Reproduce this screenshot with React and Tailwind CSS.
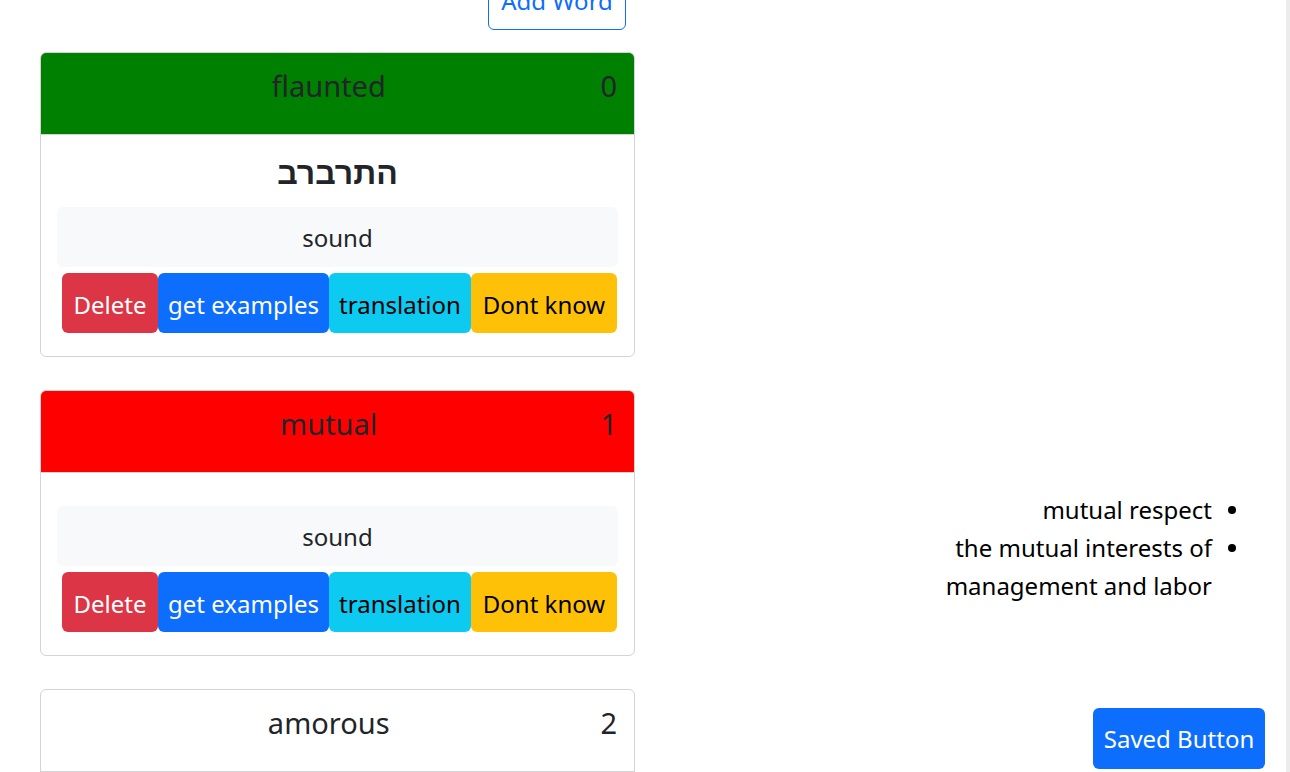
const cards = [
  { word: "flaunted", count: 0, hebrew: "התרברב", head: "bg-[#008000]" },
  { word: "mutual", count: 1, hebrew: "", head: "bg-[#ff0000]" },
];

const examples = ["mutual respect", "the mutual interests of management and labor"];

function WordCard({ word, count, hebrew, head }) {
  return (
    <div className="border border-[#d3d4d5] rounded-[6px] overflow-hidden mb-[33px]">
      <div className={`${head} h-[82px] border-b border-[#d3d4d5] flex items-start pt-[15px] pl-4 pr-[17px] text-[29px] leading-[35px] text-[#212529]`}>
        <span className="flex-1 text-center">{word}</span>
        <span>{count}</span>
      </div>
      <div className="px-4 pt-4 pb-[23px]">
        {hebrew ? (
          <div className="h-[42px] mb-[14px] pt-[2px] flex items-center justify-center text-[32px] font-bold text-[#212529] font-['Liberation_Sans','DejaVu_Sans',sans-serif]" dir="rtl">
            {hebrew}
          </div>
        ) : (
          <div className="h-[17px]" />
        )}
        <div className="bg-[#f8f9fa] rounded-[6px] h-[60px] pt-[2px] flex items-center justify-center text-[24px] text-[#212529]">
          sound
        </div>
        <div className="flex mt-[6px] ml-[5px] text-[24px] leading-[36px]">
          <button className="w-[96px] h-[60px] pt-[3px] rounded-[6px] bg-[#dc3545] text-white">Delete</button>
          <button className="w-[171px] h-[60px] pt-[3px] rounded-[6px] bg-[#0d6efd] text-white">get examples</button>
          <button className="w-[142px] h-[60px] pt-[3px] rounded-[6px] bg-[#0dcaf0] text-black">translation</button>
          <button className="w-[146px] h-[60px] pt-[3px] rounded-[6px] bg-[#ffc107] text-black">Dont know</button>
        </div>
      </div>
    </div>
  );
}

export default function App() {
  return (
    <div className="h-[772px] overflow-hidden bg-white flex font-['Noto_Sans','DejaVu_Sans',sans-serif] text-[#212529]">
      <div className="ml-[40px] w-[595px] mt-[-32px] shrink-0">
        <div className="flex justify-end pr-[9px] mb-[22px]">
          <button className="h-[62px] w-[138px] pt-[4px] border border-[#0d6efd] rounded-[6px] text-[24px] text-[#0d6efd]">Add Word</button>
        </div>
        {cards.map(c => <WordCard key={c.word} {...c} />)}
        <div className="border border-[#d3d4d5] rounded-[6px] overflow-hidden">
          <div className="h-[82px] border-b border-[#d3d4d5] flex items-start pt-[15px] pl-4 pr-[17px] text-[29px] leading-[35px]">
            <span className="flex-1 text-center">amorous</span>
            <span>2</span>
          </div>
          <div className="h-[60px]" />
        </div>
      </div>

      <div className="flex-1 flex flex-col items-end pr-[21px] pt-[491px]">
        <ul className="mr-[29px] text-[24px] leading-[38px] text-black">
          {examples.map(t => (
            <li key={t} className="flex items-start">
              <span className="w-[290px] text-right">{t}</span>
              <span className="h-[38px] w-[8px] ml-[16px] flex items-center">
                <span className="w-[8px] h-[8px] rounded-full bg-black" />
              </span>
            </li>
          ))}
        </ul>
        <button className="mt-[103px] h-[61px] w-[172px] rounded-[6px] bg-[#0d6efd] text-white text-[24px]">Saved Button</button>
      </div>

      <div className="w-[4px] shrink-0 bg-[#ececec]" />
    </div>
  );
}
